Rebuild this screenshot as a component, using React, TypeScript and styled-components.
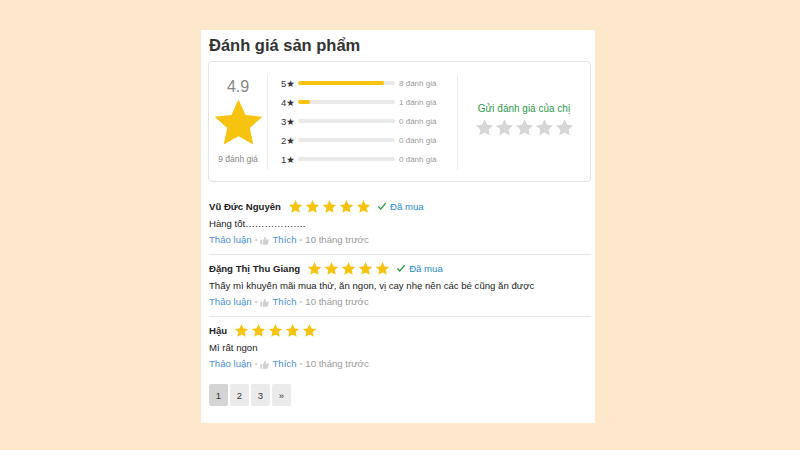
import React from 'react';
import styled, { createGlobalStyle } from 'styled-components';

const GlobalStyle = createGlobalStyle`
  html, body {
    margin: 0;
    padding: 0;
    background: #fee8cb;
    font-family: "Liberation Sans", Arial, sans-serif;
    color: #333;
  }
`;

const Page = styled.div`
  width: 800px;
  height: 450px;
  display: flex;
  justify-content: center;
  padding-top: 30px;
  box-sizing: border-box;
`;

const Card = styled.div`
  width: 394px;
  height: 393px;
  background: #fff;
  padding: 0 4px 0 7px;
  box-sizing: border-box;
  margin-left: -4px;
`;

const Title = styled.h2`
  margin: 0;
  padding: 6px 0 0 1px;
  height: 31px;
  box-sizing: border-box;
  font-size: 16.5px;
  font-weight: bold;
  color: #333;
`;

const Summary = styled.div`
  display: flex;
  height: 121px;
  border: 1px solid #e3e3e3;
  border-radius: 4px;
  box-sizing: border-box;
  padding: 13px 0 11px;
`;

const AvgCol = styled.div`
  width: 58px;
  border-right: 1px solid #ececec;
  display: flex;
  flex-direction: column;
  align-items: center;
  padding-top: 3px;
`;

const AvgValue = styled.div`
  font-size: 16px;
  color: #888;
  line-height: 18px;
`;

const AvgCount = styled.div`
  font-size: 8.5px;
  color: #888;
  margin-top: 5px;
`;

const BarsCol = styled.div`
  width: 190px;
  border-right: 1px solid #ececec;
  padding: 2px 0 0 13px;
  box-sizing: border-box;
  display: flex;
  flex-direction: column;
  gap: 7px;
`;

const BarRow = styled.div`
  display: flex;
  align-items: center;
  height: 12px;
`;

const BarLabel = styled.span`
  width: 17px;
  font-size: 9.5px;
  color: #333;
  font-family: "Liberation Sans", "DejaVu Sans", sans-serif;
`;

const Track = styled.div`
  width: 97px;
  height: 4px;
  background: #e9e9e9;
  border-radius: 2px;
  overflow: hidden;
`;

const Fill = styled.div`
  height: 100%;
  background: #f6c30f;
  border-radius: 2px;
`;

const BarCount = styled.span`
  font-size: 8px;
  color: #999;
  margin-left: 4px;
`;

const SendCol = styled.div`
  flex: 1;
  display: flex;
  flex-direction: column;
  align-items: center;
  justify-content: center;
  padding-bottom: 6px;
`;

const SendText = styled.div`
  font-size: 10px;
  color: #2c9a4b;
  margin-bottom: 4px;
`;

const StarRow = styled.div<{ $gap: number }>`
  display: flex;
  align-items: center;
  gap: ${p => p.$gap}px;
`;

const ReviewList = styled.div`
  padding: 11px 0 0 1px;
`;

const Review = styled.div`
  padding: 3px 0 8px;
  border-bottom: 1px solid #e8e8e8;

  &:last-child {
    border-bottom: none;
  }
`;

const ReviewHead = styled.div`
  display: flex;
  align-items: center;
  height: 20px;
`;

const Name = styled.span`
  font-size: 9.6px;
  font-weight: bold;
  color: #222;
  margin-right: 7px;
`;

const Bought = styled.span`
  display: flex;
  align-items: center;
  gap: 3px;
  margin-left: 6px;
  font-size: 9.6px;
  color: #288ad6;
`;

const Content = styled.div`
  font-size: 9.6px;
  color: #222;
  margin-top: 2px;
  line-height: 12px;
`;

const Actions = styled.div`
  display: flex;
  align-items: center;
  gap: 3px;
  font-size: 9.6px;
  color: #999;
  margin-top: 4px;
  line-height: 12px;
`;

const Link = styled.span`
  color: #4a90d9;
`;

const Dot = styled.span`
  color: #ccc;
  font-size: 8px;
`;

const Pager = styled.div`
  display: flex;
  gap: 2px;
  margin-top: 6px;
  padding-left: 1px;
`;

const PageBtn = styled.div<{ $active?: boolean }>`
  width: 19px;
  height: 22px;
  display: flex;
  align-items: center;
  justify-content: center;
  background: ${p => (p.$active ? '#d4d4d4' : '#ebebeb')};
  border-radius: 2px;
  font-size: 9.5px;
  color: #333;
`;

const StarIcon = ({ size, color }: { size: number; color: string }) => (
  <svg width={size} height={size} viewBox="0 0 24 24">
    <path
      d="M12 1.6l3.2 7 7.6.8-5.7 5.1 1.6 7.5L12 18.2 5.3 22l1.6-7.5L1.2 9.4l7.6-.8z"
      fill={color}
    />
  </svg>
);

const Check = () => (
  <svg width="10" height="10" viewBox="0 0 12 12">
    <path d="M1.5 6.5l3 3 6-7" fill="none" stroke="#2c9a4b" strokeWidth="1.6" />
  </svg>
);

const ThumbIcon = () => (
  <svg width="9" height="9" viewBox="0 0 12 12">
    <rect x="0.5" y="5" width="2.5" height="6.5" fill="#d0d0d0" />
    <path d="M4 5.5l2.5-4.5c1 0 1.5.6 1.3 1.6L7.5 4.5h3.3c.7 0 1.1.6.9 1.2l-1.3 5c-.2.5-.6.8-1.1.8H4z" fill="#d0d0d0" />
  </svg>
);

const bars = [
  { star: 5, pct: 89, count: 8 },
  { star: 4, pct: 12, count: 1 },
  { star: 3, pct: 0, count: 0 },
  { star: 2, pct: 0, count: 0 },
  { star: 1, pct: 0, count: 0 },
];

const reviews = [
  { name: 'Vũ Đức Nguyên', bought: true, text: 'Hàng tốt……………….' },
  { name: 'Đặng Thị Thu Giang', bought: true, text: 'Thấy mì khuyến mãi mua thử, ăn ngon, vị cay nhẹ nên các bé cũng ăn được' },
  { name: 'Hậu', bought: false, text: 'Mì rất ngon' },
];

const Stars = ({ size, gap, color }: { size: number; gap: number; color: string }) => (
  <StarRow $gap={gap}>
    {[0, 1, 2, 3, 4].map(i => (
      <StarIcon key={i} size={size} color={color} />
    ))}
  </StarRow>
);

const App: React.FC = () => {
  return (
    <>
      <GlobalStyle />
      <Page>
        <Card>
          <Title>Đánh giá sản phẩm</Title>
          <Summary>
            <AvgCol>
              <AvgValue>4.9</AvgValue>
              <StarIcon size={53} color="#f6c30f" />
              <AvgCount>9 đánh giá</AvgCount>
            </AvgCol>
            <BarsCol>
              {bars.map(b => (
                <BarRow key={b.star}>
                  <BarLabel>{b.star}★</BarLabel>
                  <Track>
                    <Fill style={{ width: `${b.pct}%` }} />
                  </Track>
                  <BarCount>{b.count} đánh giá</BarCount>
                </BarRow>
              ))}
            </BarsCol>
            <SendCol>
              <SendText>Gửi đánh giá của chị</SendText>
              <Stars size={19} gap={1} color="#d6d6d6" />
            </SendCol>
          </Summary>
          <ReviewList>
            {reviews.map(r => (
              <Review key={r.name}>
                <ReviewHead>
                  <Name>{r.name}</Name>
                  <Stars size={15} gap={2} color="#f6c30f" />
                  {r.bought && (
                    <Bought>
                      <Check />
                      Đã mua
                    </Bought>
                  )}
                </ReviewHead>
                <Content>{r.text}</Content>
                <Actions>
                  <Link>Thảo luận</Link>
                  <Dot>•</Dot>
                  <ThumbIcon />
                  <Link>Thích</Link>
                  <Dot>•</Dot>
                  <span>10 tháng trước</span>
                </Actions>
              </Review>
            ))}
          </ReviewList>
          <Pager>
            <PageBtn $active>1</PageBtn>
            <PageBtn>2</PageBtn>
            <PageBtn>3</PageBtn>
            <PageBtn>»</PageBtn>
          </Pager>
        </Card>
      </Page>
    </>
  );
};

export default App;
